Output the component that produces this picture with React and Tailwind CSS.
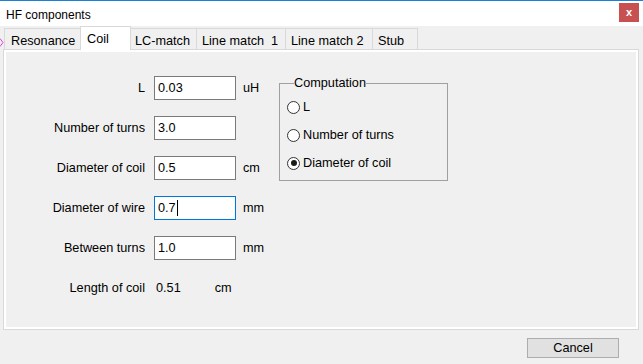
import { useState } from "react";

const tabs = [
  { label: "Resonance", w: "w-[77px]", pl: "pl-[6px]" },
  { label: "Coil", w: "w-[51px]", pl: "pl-[6px]", active: true },
  { label: "LC-match", w: "w-[67px]", pl: "pl-[4px]" },
  { label: "Line match  1", w: "w-[90px]", pl: "pl-[5px]" },
  { label: "Line match 2", w: "w-[88px]", pl: "pl-[5px]" },
  { label: "Stub", w: "w-[46px]", pl: "pl-[5px]", last: true },
];

function Field({ label, value, unit, focused }) {
  return (
    <div className="flex items-center h-[24px]">
      <span className="w-[138px] text-right">{label}</span>
      <div
        className={`ml-[9px] w-[82px] h-[24px] bg-white border flex items-center pl-[3px] ${
          focused ? "border-[#0078d7]" : "border-[#7a7a7a]"
        }`}
      >
        <span>{value}</span>
        {focused && <span className="w-px h-[16px] bg-black ml-px" />}
      </div>
      {unit && <span className="ml-[7px]">{unit}</span>}
    </div>
  );
}

function Radio({ label, checked, onClick }) {
  return (
    <div className="flex items-center h-[28px] cursor-default" onClick={onClick}>
      <div className="w-[13px] h-[13px] rounded-full border border-[#333] bg-white flex items-center justify-center">
        {checked && <div className="w-[6px] h-[6px] rounded-full bg-[#1a1a1a]" />}
      </div>
      <span className="ml-[3px]">{label}</span>
    </div>
  );
}

export default function App() {
  const [mode, setMode] = useState(2);

  return (
    <div className="relative w-[643px] h-[364px] bg-[#f0f0f0] overflow-hidden text-black font-['Liberation_Sans',Arial,sans-serif] text-[12.7px] leading-none">
      {/* title bar */}
      <div className="h-px bg-[#1883d7]" />
      <div className="h-[25px] bg-white flex items-start justify-between pl-[6px] pr-[4px]">
        <span className="text-[12px] mt-[8px]">HF components</span>
        <div className="mt-[2px] w-[20px] h-[19px] bg-[#c75050] flex items-center justify-center text-white text-[11px] font-bold">
          x
        </div>
      </div>

      {/* tabs */}
      <div className="relative z-10 flex items-end h-[24px] pl-[4px] -mb-px">
        {tabs.map((t) =>
          t.active ? (
            <div
              key={t.label}
              className={`${t.w} h-[24px] -ml-px bg-white border border-b-0 border-[#d9d9d9] ${t.pl} pt-[6px] whitespace-pre`}
            >
              {t.label}
            </div>
          ) : (
            <div
              key={t.label}
              className={`${t.w} h-[22px] -ml-px first:ml-0 border border-b-0 border-[#d9d9d9] ${t.pl} pt-[6px] whitespace-pre`}
            >
              {t.label}
            </div>
          )
        )}
      </div>

      {/* panel */}
      <div className="ml-[3px] w-[636px] h-[281px] border border-[#d9d9d9] bg-white p-[2px]">
        <div className="w-full h-full bg-[#f0f0f0] flex pt-[24px] pl-[1px]">
          <div className="w-[272px] flex flex-col gap-[16px]">
            <Field label="L" value="0.03" unit="uH" />
            <Field label="Number of turns" value="3.0" />
            <Field label="Diameter of coil" value="0.5" unit="cm" />
            <Field label="Diameter of wire" value="0.7" unit="mm" focused />
            <Field label="Between turns" value="1.0" unit="mm" />
            <div className="flex items-center h-[24px]">
              <span className="w-[138px] text-right">Length of coil</span>
              <span className="ml-[11px]">0.51</span>
              <span className="ml-[34px]">cm</span>
            </div>
          </div>

          <fieldset className="mt-[-1px] w-[169px] h-[106px] border border-[#a0a0a0] pl-[7px] pt-[2px] self-start">
            <legend className="ml-[7px] px-0 leading-[16px]">Computation</legend>
            <Radio label="L" checked={mode === 0} onClick={() => setMode(0)} />
            <Radio label="Number of turns" checked={mode === 1} onClick={() => setMode(1)} />
            <Radio label="Diameter of coil" checked={mode === 2} onClick={() => setMode(2)} />
          </fieldset>
        </div>
      </div>

      {/* buttons */}
      <div className="flex justify-end pr-[24px] pt-[8px]">
        <button className="w-[92px] h-[20px] bg-[#e1e1e1] border border-[#adadad] text-[12.7px] leading-none">
          Cancel
        </button>
      </div>

      {/* little magenta marker on the left edge */}
      <svg className="absolute left-0 top-[38px]" width="4" height="9" viewBox="0 0 4 9">
        <path d="M0 0.5 L3 4.5 L0 8.5" stroke="#e040e0" strokeWidth="1" fill="none" />
      </svg>
    </div>
  );
}
